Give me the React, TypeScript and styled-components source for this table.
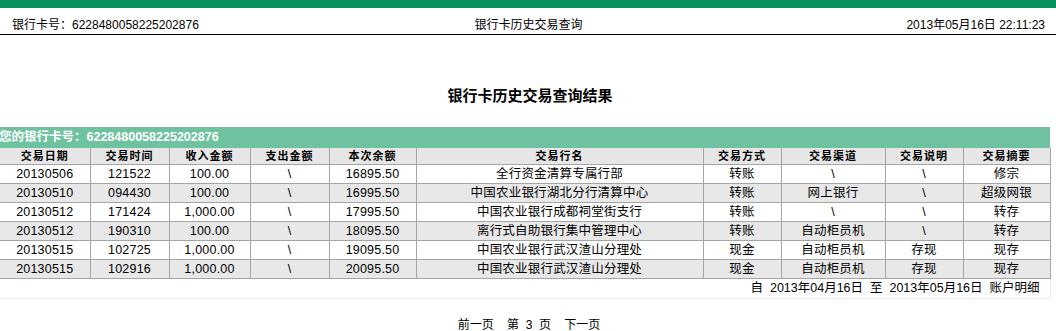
import { createGlobalStyle } from "styled-components";
import styled from "styled-components";

const GlobalStyle = createGlobalStyle`
  body {
    margin: 0;
    background: #fff;
    font-family: "Liberation Sans", Arial, "Noto Sans CJK SC", sans-serif;
    color: #000;
  }
`;

type Row = {
  date: string;
  time: string;
  income: string;
  expense: string;
  balance: string;
  branch: string;
  method: string;
  channel: string;
  note: string;
  summary: string;
};

const rows: Row[] = [
  { date: "20130506", time: "121522", income: "100.00", expense: "\\", balance: "16895.50", branch: "全行资金清算专属行部", method: "转账", channel: "\\", note: "\\", summary: "修宗" },
  { date: "20130510", time: "094430", income: "100.00", expense: "\\", balance: "16995.50", branch: "中国农业银行湖北分行清算中心", method: "转账", channel: "网上银行", note: "\\", summary: "超级网银" },
  { date: "20130512", time: "171424", income: "1,000.00", expense: "\\", balance: "17995.50", branch: "中国农业银行成都祠堂街支行", method: "转账", channel: "\\", note: "\\", summary: "转存" },
  { date: "20130512", time: "190310", income: "100.00", expense: "\\", balance: "18095.50", branch: "离行式自助银行集中管理中心", method: "转账", channel: "自动柜员机", note: "\\", summary: "转存" },
  { date: "20130515", time: "102725", income: "1,000.00", expense: "\\", balance: "19095.50", branch: "中国农业银行武汉渣山分理处", method: "现金", channel: "自动柜员机", note: "存现", summary: "现存" },
  { date: "20130515", time: "102916", income: "1,000.00", expense: "\\", balance: "20095.50", branch: "中国农业银行武汉渣山分理处", method: "现金", channel: "自动柜员机", note: "存现", summary: "现存" },
];

const columns = [
  { title: "交易日期", width: 90 },
  { title: "交易时间", width: 79 },
  { title: "收入金额", width: 81 },
  { title: "支出金额", width: 79 },
  { title: "本次余额", width: 87 },
  { title: "交易行名", width: 287 },
  { title: "交易方式", width: 78 },
  { title: "交易渠道", width: 104 },
  { title: "交易说明", width: 78 },
  { title: "交易摘要", width: 87 },
];

const TopBar = styled.div`
  height: 8px;
  background: #07915f;
`;

const PageHeader = styled.div`
  height: 26px;
  display: flex;
  align-items: flex-end;
  justify-content: space-between;
  padding: 0 11px 0 12px;
  border-bottom: 1px solid #000;
  font-size: 12px;
  line-height: 14px;
  padding-bottom: 2px;
  box-sizing: border-box;
  height: 27px;
`;

const HeaderCell = styled.span<{ $align: "left" | "center" | "right" }>`
  flex: 1;
  text-align: ${(p) => p.$align};
  white-space: nowrap;
`;

const Title = styled.h1`
  margin: 52px 0 0;
  text-align: center;
  font-size: 15px;
  line-height: 18px;
  font-weight: bold;
  padding-left: 4px;
`;

const CardBand = styled.div`
  margin-top: 22px;
  width: 1050px;
  height: 21px;
  background: #6fc29f;
  color: #fff;
  font-weight: bold;
  font-size: 12.5px;
  line-height: 21px;
  white-space: nowrap;
  overflow: hidden;
  text-indent: -1px;
`;

const Table = styled.table`
  width: 1050px;
  border-collapse: collapse;
  table-layout: fixed;
`;

const HeadCell = styled.th`
  height: 16px;
  padding: 0;
  background: #e6e6e6;
  border: 1px solid #a5a5a5;
  border-top: none;
  font-size: 11px;
  line-height: 16px;
  letter-spacing: 1px;
  font-weight: bold;
  text-align: center;
  &:first-child {
    border-left: none;
  }
`;

const BodyRow = styled.tr<{ $striped: boolean }>`
  background: ${(p) => (p.$striped ? "#e8e8e8" : "#fff")};
`;

const Cell = styled.td`
  height: 18px;
  padding: 0;
  border: 1px solid #a5a5a5;
  font-size: 12.5px;
  line-height: 18px;
  text-align: center;
  white-space: nowrap;
  letter-spacing: 0.2px;
  &:first-child {
    border-left: none;
  }
`;

const FooterCell = styled.td`
  height: 19px;
  padding: 0 10px 0 0;
  border-bottom: 1px solid #ececec;
  border-right: 1px solid #ececec;
  font-size: 12.5px;
  line-height: 19px;
  text-align: right;
  white-space: pre;
`;

const Pager = styled.div`
  margin-top: 19px;
  text-align: center;
  font-size: 12px;
  line-height: 14px;
  white-space: pre;
  padding-left: 2px;
`;

export default function App() {
  return (
    <>
      <GlobalStyle />
      <TopBar />
      <PageHeader>
        <HeaderCell $align="left">银行卡号：6228480058225202876</HeaderCell>
        <HeaderCell $align="center">银行卡历史交易查询</HeaderCell>
        <HeaderCell $align="right">2013年05月16日 22:11:23</HeaderCell>
      </PageHeader>
      <Title>银行卡历史交易查询结果</Title>
      <CardBand>您的银行卡号：6228480058225202876</CardBand>
      <Table>
        <colgroup>
          {columns.map((c) => (
            <col key={c.title} style={{ width: c.width }} />
          ))}
        </colgroup>
        <thead>
          <tr>
            {columns.map((c) => (
              <HeadCell key={c.title}>{c.title}</HeadCell>
            ))}
          </tr>
        </thead>
        <tbody>
          {rows.map((r, i) => (
            <BodyRow key={i} $striped={i % 2 === 1}>
              <Cell>{r.date}</Cell>
              <Cell>{r.time}</Cell>
              <Cell>{r.income}</Cell>
              <Cell>{r.expense}</Cell>
              <Cell>{r.balance}</Cell>
              <Cell>{r.branch}</Cell>
              <Cell>{r.method}</Cell>
              <Cell>{r.channel}</Cell>
              <Cell>{r.note}</Cell>
              <Cell>{r.summary}</Cell>
            </BodyRow>
          ))}
          <tr>
            <FooterCell colSpan={10}>自  2013年04月16日  至  2013年05月16日  账户明细</FooterCell>
          </tr>
        </tbody>
      </Table>
      <Pager>前一页    第  3  页    下一页</Pager>
    </>
  );
}
